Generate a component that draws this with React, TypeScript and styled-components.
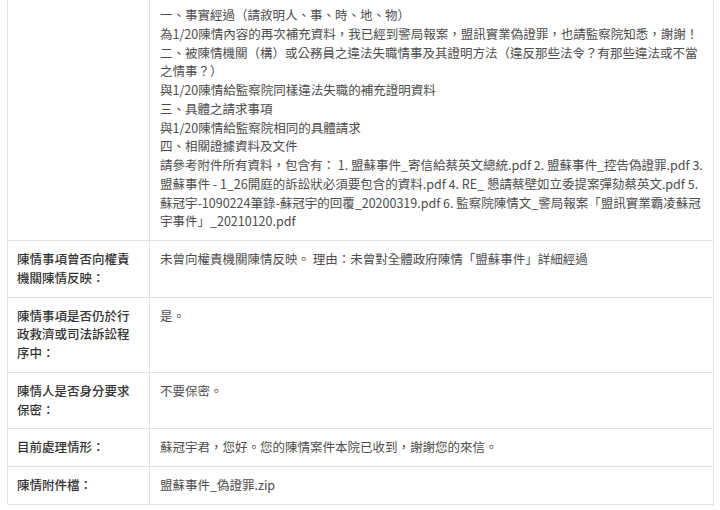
import React from "react";
import styled, { createGlobalStyle } from "styled-components";

const Global = createGlobalStyle`
  html, body { margin: 0; padding: 0; background: #ffffff; }
  body { font-family: "Noto Sans CJK TC", "Noto Sans", sans-serif; }
`;

const Page = styled.div`
  padding: 0 0 0 7px;
  margin-top: -4px;
  width: 707px;
`;

const Table = styled.table`
  width: 707px;
  border-collapse: collapse;
  table-layout: fixed;
  border: 1px solid #e2e2e2;
  font-size: 12.5px;
  line-height: 18.75px;
`;

const Row = styled.tr``;

const Label = styled.th`
  width: 121px;
  padding: 9px 10px 9px 9px;
  border: 1px solid #e2e2e2;
  vertical-align: top;
  text-align: left;
  font-weight: 500;
  color: #333333;
`;

const Value = styled.td`
  padding: 9px 10px;
  border: 1px solid #e2e2e2;
  vertical-align: top;
  color: #4d4d4d;
  font-weight: 400;
`;

const Line = styled.div`
  white-space: nowrap;
`;

const detailLines = [
  "一、事實經過（請敘明人、事、時、地、物）",
  "為1/20陳情內容的再次補充資料，我已經到警局報案，盟訊實業偽證罪，也請監察院知悉，謝謝！",
  "二、被陳情機關（構）或公務員之違法失職情事及其證明方法（違反那些法令？有那些違法或不當",
  "之情事？）",
  "與1/20陳情給監察院同樣違法失職的補充證明資料",
  "三、具體之請求事項",
  "與1/20陳情給監察院相同的具體請求",
  "四、相關證據資料及文件",
  "請參考附件所有資料，包含有： 1. 盟蘇事件_寄信給蔡英文總統.pdf 2. 盟蘇事件_控告偽證罪.pdf 3.",
  "盟蘇事件 - 1_26開庭的訴訟狀必須要包含的資料.pdf 4. RE_ 懇請蔡壁如立委提案彈劾蔡英文.pdf 5.",
  "蘇冠宇-1090224筆錄-蘇冠宇的回覆_20200319.pdf 6. 監察院陳情文_警局報案「盟訊實業霸凌蘇冠",
  "宇事件」_20210120.pdf",
];

const rows: { label: string; value: string }[] = [
  {
    label: "陳情事項曾否向權責機關陳情反映：",
    value: "未曾向權責機關陳情反映。 理由：未曾對全體政府陳情「盟蘇事件」詳細經過",
  },
  { label: "陳情事項是否仍於行政救濟或司法訴訟程序中：", value: "是。" },
  { label: "陳情人是否身分要求保密：", value: "不要保密。" },
  {
    label: "目前處理情形：",
    value: "蘇冠宇君，您好。您的陳情案件本院已收到，謝謝您的來信。",
  },
  { label: "陳情附件檔：", value: "盟蘇事件_偽證罪.zip" },
];

export default function App() {
  return (
    <>
      <Global />
      <Page>
        <Table>
          <colgroup>
            <col style={{ width: 142 }} />
            <col />
          </colgroup>
          <tbody>
            <Row>
              <Label></Label>
              <Value>
                {detailLines.map((l, i) => (
                  <Line key={i}>{l}</Line>
                ))}
              </Value>
            </Row>
            {rows.map((r) => (
              <Row key={r.label}>
                <Label>{r.label}</Label>
                <Value>{r.value}</Value>
              </Row>
            ))}
          </tbody>
        </Table>
      </Page>
    </>
  );
}
